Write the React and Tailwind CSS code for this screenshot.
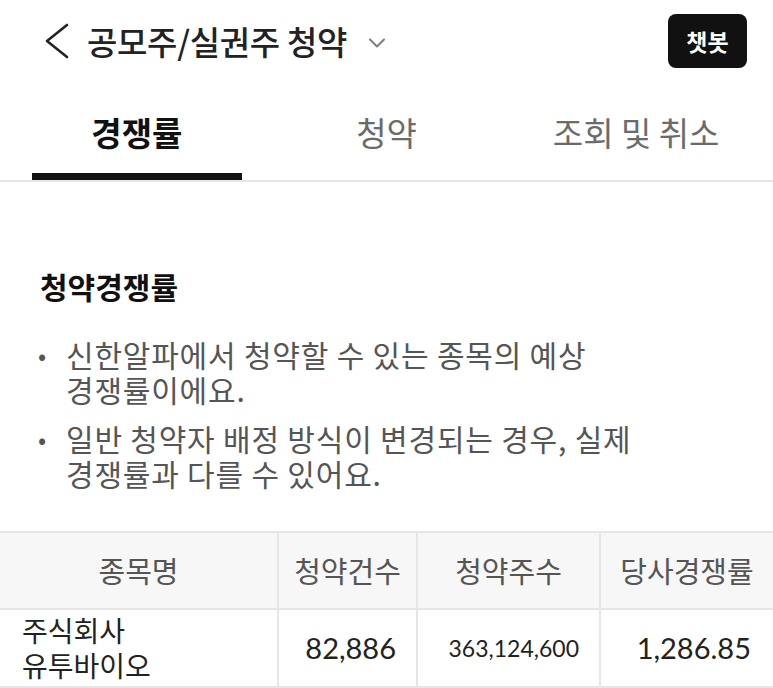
import { ChevronDown } from 'lucide-react'

const kr = { fontFamily: '"Noto Sans CJK KR", "Noto Sans", sans-serif' }
const num = { fontFamily: 'Lato, "Noto Sans CJK KR", sans-serif' }

const tabs = ["경쟁률", "청약", "조회 및 취소"]

const notes = [
  ["신한알파에서 청약할 수 있는 종목의 예상", "경쟁률이에요."],
  ["일반 청약자 배정 방식이 변경되는 경우, 실제", "경쟁률과 다를 수 있어요."],
]

const App = () => {
  return (
    <div className="w-[773px] h-[688px] bg-white overflow-hidden" style={kr}>
      {/* header */}
      <div className="h-[82px] flex items-center pl-[45px] pr-[26px]">
        <svg width="24" height="36" viewBox="0 0 24 36" fill="none" stroke="#222" strokeWidth="2.6" strokeLinecap="round" strokeLinejoin="round">
          <polyline points="22,2 2,18 22,34" />
        </svg>
        <h1 className="ml-[18px] text-[33px] leading-none text-[#222] font-medium tracking-[-0.3px]">
          공모주/실권주 청약
        </h1>
        <ChevronDown className="ml-[16px] mt-[4px] w-[28px] h-[28px] text-[#7a7f87]" strokeWidth={1.8} />
        <button className="ml-auto w-[79px] h-[54px] rounded-[8px] bg-[#111] text-white text-[23px] font-bold">
          챗봇
        </button>
      </div>

      {/* tabs */}
      <div className="border-b-2 border-[#e6e6e6]">
        <div className="grid grid-cols-3 gap-10 px-8">
          {tabs.map((t, i) => (
            <div key={t} className="flex flex-col items-center">
              <div
                className={`h-[91px] pt-[10px] flex items-center text-[33px] leading-none ${
                  i === 0 ? "font-bold text-[#111]" : "text-[#6b6b6b]"
                }`}
              >
                {t}
              </div>
              <div className={`h-[7px] w-full ${i === 0 ? "bg-[#111]" : ""}`} />
            </div>
          ))}
        </div>
      </div>

      {/* section */}
      <div className="pt-[89px] px-[38px]">
        <h2 className="text-[30px] font-bold text-[#111] leading-none ml-[2px]">청약경쟁률</h2>
        <ul className="mt-[36px] flex flex-col gap-[14px]">
          {notes.map((n) => (
            <li key={n[0]} className="flex text-[30px] leading-[35px] text-[#555]">
              <span className="w-[28px] shrink-0 text-[24px]">•</span>
              <span className="tracking-[0.8px]">
                {n[0]}
                <br />
                {n[1]}
              </span>
            </li>
          ))}
        </ul>
      </div>

      {/* table */}
      <table className="mt-[40px] w-full border-collapse">
        <thead>
          <tr className="bg-[#f7f7f7] h-[77px] text-[29px] text-[#555] font-normal">
            <th className="w-[278px] border-y-2 border-r-2 border-[#e6e6e6] font-normal">종목명</th>
            <th className="w-[139px] border-2 border-[#e6e6e6] font-normal">청약건수</th>
            <th className="w-[183px] border-2 border-[#e6e6e6] font-normal">청약주수</th>
            <th className="border-y-2 border-l-2 border-[#e6e6e6] font-normal">당사경쟁률</th>
          </tr>
        </thead>
        <tbody>
          <tr className="h-[78px] text-[#222]">
            <td className="border-r-2 border-b-2 border-[#e6e6e6] pl-[22px] text-[28px] leading-[35px]">
              주식회사
              <br />
              유투바이오
            </td>
            <td className="border-x-2 border-b-2 border-[#e6e6e6] text-right pr-[20px] text-[29px]" style={num}>
              82,886
            </td>
            <td className="border-x-2 border-b-2 border-[#e6e6e6] text-right pr-[20px] text-[23px]" style={num}>
              363,124,600
            </td>
            <td className="border-l-2 border-b-2 border-[#e6e6e6] text-right pr-[22px] text-[29px]" style={num}>
              1,286.85
            </td>
          </tr>
        </tbody>
      </table>
    </div>
  )
}

export default App
